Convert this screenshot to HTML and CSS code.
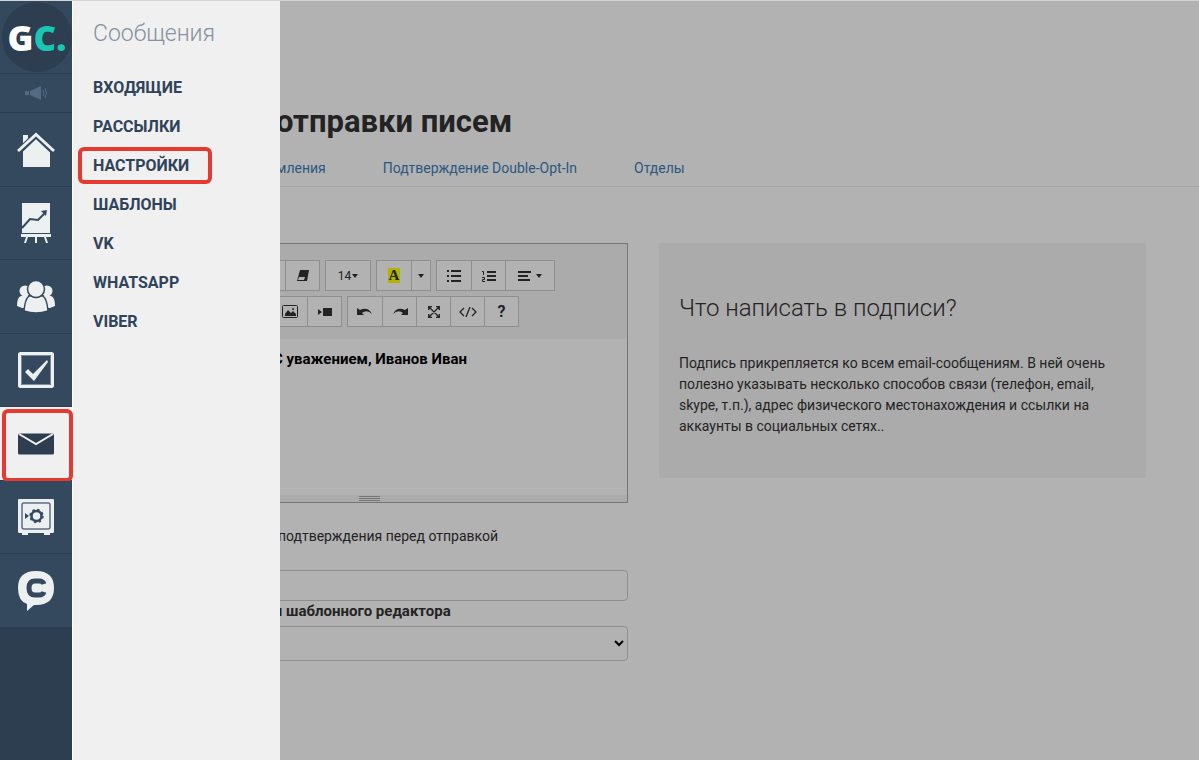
FILE: index.html
```html
<!DOCTYPE html>
<html lang="ru">
<head>
<meta charset="utf-8">
<title>Сообщения</title>
<link rel="stylesheet" href="styles.css">
</head>
<body>
<div class="app">
  <nav class="sidebar">
    <a class="side-item side-logo" href="#" aria-label="GC">
      <span class="logo"><span class="logo-g">G</span><span class="logo-c">C.</span></span>
    </a>
    <a class="side-item side-horn" href="#" aria-label="Новости">
      <svg width="24" height="16" viewBox="0 0 24 16"><path fill="#536a82" d="M1 6h4v4H1zM6 6l11-5v14L6 10z"/><path fill="none" stroke="#536a82" d="M19 5q2 3 0 6M21 3q3 5 0 10"/></svg>
    </a>
    <a class="side-item" href="#" aria-label="Главная">
      <svg width="38" height="36" viewBox="0 0 38 36"><path fill="#ecf0f1" d="M6 3h5v4l-5 5zM19 6l14 13v16H6V19z"/><path fill="none" stroke="#34495e" stroke-width="6" d="M1 20 19 3l18 17"/><path fill="none" stroke="#ecf0f1" stroke-width="3" d="M1 19 19 2.500l18 16.500"/></svg>
    </a>
    <a class="side-item" href="#" aria-label="Статистика">
      <svg width="30" height="42" viewBox="0 0 30 42"><path fill="#ecf0f1" d="M1 1h28v30H1zM0 32h30v3H0zM5 35h2l-2 6H3zM14 35h2v6h-2zM23 35h2l2 6h-2z"/><path fill="none" stroke="#34495e" stroke-width="2" d="m1 26 8-9 8 1 7-7"/><path fill="#34495e" d="m26 8-1 6-5-5z"/><path stroke="#34495e" d="M1 31.500h28"/></svg>
    </a>
    <a class="side-item" href="#" aria-label="Пользователи">
      <svg width="38" height="34" viewBox="0 0 38 34"><g fill="#ecf0f1"><circle cx="8" cy="11" r="5.500"/><circle cx="30" cy="11" r="5.500"/><path d="M0 26q0-9 4-10h30q4 1 4 10l-5 2H5z"/></g><g fill="#ecf0f1" stroke="#34495e" stroke-width="1.500"><path d="M7 31q1-12 5-15h14q4 3 5 15-12 4-24 0z"/><circle cx="19" cy="9" r="8.500"/></g></svg>
    </a>
    <a class="side-item" href="#" aria-label="Задачи">
      <svg width="36" height="36" viewBox="0 0 36 36"><rect x="1.500" y="1.500" width="33" height="33" rx="1" fill="none" stroke="#ecf0f1" stroke-width="3"/><path fill="none" stroke="#7c8b9b" d="M3.500 3.500h29v29h-29z"/><path fill="#ecf0f1" d="m7 20 3-3 5 5L29 8l1 2-14 19z"/></svg>
    </a>
    <a class="side-item side-active" href="#" aria-label="Сообщения">
      <svg width="36" height="22" viewBox="0 0 36 22"><rect y="0.500" width="36" height="21" rx="1.500" fill="#2c3e50"/><path fill="none" stroke="#f0f0f0" stroke-width="2" d="m1 1 17 10L35 1"/></svg>
    </a>
    <a class="side-item" href="#" aria-label="Продажи">
      <svg width="36" height="36" viewBox="0 0 36 36"><path fill="#ecf0f1" d="M1 0h34q1 0 1 1v32q0 1-1 1h-3v2h-6v-2H10v2H4v-2H1q-1 0-1-1V1q0-1 1-1z"/><rect x="4" y="4" width="28" height="26" rx="2" fill="none" stroke="#5d6f80" stroke-width="1.500"/><circle cx="18.500" cy="17" r="5" fill="none" stroke="#34495e" stroke-width="2.500"/><circle cx="18.500" cy="17" r="6.500" fill="none" stroke="#34495e" stroke-width="1.500" stroke-dasharray="2.500 2.600"/><path fill="#34495e" d="m7 14 4 3-4 3z"/></svg>
    </a>
    <a class="side-item" href="#" aria-label="Чат">
      <svg width="36" height="40" viewBox="0 0 36 40"><path fill="#ecf0f1" d="M18 0q18 0 18 17T18 34h-2l-7 6V33Q0 30 0 17 0 0 18 0z"/><path fill="none" stroke="#34495e" stroke-width="5" d="M26 13q-1-3-5-3h-4q-6 0-6 7t6 7h4q4 0 5-3"/></svg>
    </a>
  </nav>

  <main class="page">
    <header class="page-head">
      <h1 class="page-title">отправки писем</h1>
      <div class="tabs">
        <a href="#">мления</a>
        <a href="#">Подтверждение Double-Opt-In</a>
        <a href="#">Отделы</a>
      </div>
    </header>
    <div class="columns">
      <form class="form">
        <div class="editor">
          <div class="toolbar">
            <div class="tool-row tool-row-first">
              <div class="group">
                <button type="button" class="tool" aria-label="Зачеркнутый"></button>
                <button type="button" class="tool" aria-label="Очистить"><svg width="12" height="11" viewBox="0 0 12 11"><path fill="#333" d="M3 0h9l-2 11H0z"/><path fill="#fff" d="M2 7h6l-1 3H1z"/></svg></button>
              </div>
              <div class="group"><button type="button" class="tool tool-size">14<span class="caret"></span></button></div>
              <div class="group">
                <button type="button" class="tool"><span class="marker">A</span></button>
                <button type="button" class="tool tool-caret" aria-label="Цвет"><span class="caret"></span></button>
              </div>
              <div class="group">
                <button type="button" class="tool" aria-label="Список"><svg width="14" height="12" viewBox="0 0 14 12"><path fill="#333" d="M0 0h2v2H0zM4 0h10v2H4zM0 5h2v2H0zM4 5h10v2H4zM0 10h2v2H0zM4 10h10v2H4z"/></svg></button>
                <button type="button" class="tool" aria-label="Нумерованный список"><svg width="14" height="12" viewBox="0 0 14 12"><path fill="#333" d="M5 1h9v2H5zM5 5h9v2H5zM5 9h9v2H5z"/><path fill="none" stroke="#333" d="M0 1.500h1.500V5M0 7.500h2.500v2H.5v2H3"/></svg></button>
                <button type="button" class="tool tool-align" aria-label="Выравнивание"><svg width="13" height="10" viewBox="0 0 13 10"><path fill="#333" d="M0 0h13v2H0zM0 4h10v2H0zM0 8h12v2H0z"/></svg><span class="caret"></span></button>
              </div>
            </div>
            <div class="tool-row tool-row-second">
              <div class="group">
                <button type="button" class="tool" aria-label="Картинка"><svg width="16" height="13" viewBox="0 0 16 13"><rect x="0.500" y="0.500" width="15" height="12" rx="1" fill="none" stroke="#333"/><path fill="#333" d="M3 11V9l3-4 3 3 2-2 3 3v2z"/><circle cx="11" cy="4" r="1" fill="#333"/></svg></button>
                <button type="button" class="tool" aria-label="Видео"><svg width="14" height="10" viewBox="0 0 14 10"><path fill="#333" d="M5 1h9v8H5zM0 2l4 3-4 3z"/></svg></button>
              </div>
              <div class="group">
                <button type="button" class="tool" aria-label="Отменить"><svg width="16" height="10" viewBox="0 0 16 10"><path fill="#333" d="M0 1v7h7L5 6q5-4 10 1Q11-1 3 3z"/></svg></button>
                <button type="button" class="tool" aria-label="Повторить"><svg width="16" height="10" viewBox="0 0 16 10"><path fill="#333" d="M16 1v7H9l2-2Q6 2 1 7 5-1 13 3z"/></svg></button>
                <button type="button" class="tool" aria-label="На весь экран"><svg width="12" height="12" viewBox="0 0 12 12"><path fill="none" stroke="#333" stroke-width="1.300" d="m1 1 10 10M11 1 1 11M.7 4V.7H4M8 .7h3.300V4M.7 8v3.300H4M8 11.300h3.300V8"/></svg></button>
                <button type="button" class="tool" aria-label="Код"><svg width="18" height="10" viewBox="0 0 18 10"><path fill="none" stroke="#333" stroke-width="1.300" d="M5 1 1 5l4 4M13 1l4 4-4 4M11 0 7 10"/></svg></button>
                <button type="button" class="tool tool-help">?</button>
              </div>
            </div>
          </div>
          <div class="editor-body">С уважением, Иванов Иван</div>
          <div class="grip"><span class="grip-lines"></span></div>
        </div>
        <p class="confirm">подтверждения перед отправкой</p>
        <input class="field" type="text" aria-label="Адрес отправителя">
        <label class="field-label" for="template">я шаблонного редактора</label>
        <select class="field field-select" id="template"><option></option></select>
      </form>
      <aside class="hint">
        <h2 class="hint-title">Что написать в подписи?</h2>
        <p class="hint-text">Подпись прикрепляется ко всем email-сообщениям. В ней очень полезно указывать несколько способов связи (телефон, email, skype, т.п.), адрес физического местонахождения и ссылки на аккаунты в социальных сетях..</p>
      </aside>
    </div>
  </main>

  <div class="backdrop"></div>
  <section class="flyout">
    <h2 class="flyout-title">Сообщения</h2>
    <a class="flyout-link" href="#">ВХОДЯЩИЕ</a>
    <a class="flyout-link" href="#">РАССЫЛКИ</a>
    <a class="flyout-link flyout-marked" href="#">НАСТРОЙКИ</a>
    <a class="flyout-link" href="#">ШАБЛОНЫ</a>
    <a class="flyout-link" href="#">VK</a>
    <a class="flyout-link" href="#">WHATSAPP</a>
    <a class="flyout-link" href="#">VIBER</a>
  </section>
</div>
</body>
</html>
```
FILE: styles.css
```css
* { box-sizing: border-box; }
body {
  margin: 0;
  background: #fff;
  color: #333;
  font: 14px/21px Roboto, "Liberation Sans", sans-serif;
}
a { text-decoration: none; }
h1, h2, p { margin: 0; }
svg { display: block; }

.app {
  position: relative;
  display: flex;
  min-height: 100vh;
  border-top: 1px solid #d3d5d5;
}

/* Sidebar */
.sidebar {
  position: relative;
  z-index: 3;
  flex: none;
  width: 72px;
  background: #2c3e50;
}
.side-item {
  position: relative;
  display: flex;
  align-items: center;
  justify-content: center;
  height: 74px;
  background: #34495e;
  border-bottom: 1px solid #2b3d50;
}
.side-item:nth-child(even) { height: 73px; }
.sidebar .side-logo { height: 73px; }
.sidebar .side-horn { height: 39px; }
.side-active { background: #f0f0f0; }
.logo {
  display: flex;
  align-items: center;
  justify-content: center;
  width: 70px;
  height: 70px;
  margin-left: 2px;
  border-radius: 50%;
  background: #2c3e50;
  font: 800 35px/1 "Open Sans", sans-serif;
}
.logo-g { color: #fff; }
.logo-c { color: #1cc4b4; }
.side-active::after {
  content: "";
  position: absolute;
  inset: 2px -1px -2px 2px;
  border: 4px solid #e53a30;
  border-radius: 6px;
}

/* Flyout menu */
.flyout {
  position: absolute;
  z-index: 2;
  top: 0;
  bottom: 0;
  left: 72px;
  width: 208px;
  padding: 18px 5px;
  background: #f0f0f0;
  border-left: 1px solid #fff;
}
.flyout-title {
  padding: 0 15px;
  margin-bottom: 20px;
  color: #8791a0;
  font-size: 23px;
  line-height: 30px;
  font-weight: 300;
}
.flyout-link {
  display: block;
  width: fit-content;
  margin-bottom: 2px;
  padding: 8px 15px;
  color: #2f435a;
  font-size: 16px;
  font-weight: 700;
}
.flyout-marked {
  position: relative;
}
.flyout-marked::after {
  content: "";
  position: absolute;
  inset: 0 -8px 0 0;
  border: 4px solid #e53a30;
  border-radius: 6px;
}
.backdrop {
  position: absolute;
  z-index: 1;
  inset: 0;
  background: rgba(0, 0, 0, 0.3);
}

/* Page */
.page { flex: 1; min-width: 0; }
.page-head {
  padding: 101px 0 7px 204px;
  border-bottom: 1px solid #eee;
}
.page-title {
  margin-bottom: 16px;
  font-size: 31px;
  line-height: 40px;
  font-weight: 700;
}
.tabs { display: flex; gap: 57px; }
.tabs a { color: #4080b8; }
.columns {
  display: grid;
  grid-template-columns: 1fr 1fr;
  align-items: start;
  gap: 31px;
  padding: 56px 53px 20px 69px;
}

/* Editor */
.editor { border: 1px solid #a9a9a9; }
.toolbar {
  display: flex;
  flex-direction: column;
  gap: 5px;
  padding: 16px 0 12px;
  background: #f5f5f5;
}
.tool-row { display: flex; gap: 5px; }
.tool-row-first { padding-left: 108px; }
.tool-row-second { padding-left: 130px; }
.group {
  display: flex;
  border: 1px solid #ccc;
}
.tool {
  display: flex;
  align-items: center;
  justify-content: center;
  gap: 5px;
  width: 34px;
  height: 29px;
  padding: 0;
  border: 0;
  background: #fff;
  color: #333;
  font: 12px/18px Roboto, sans-serif;
}
.tool + .tool { border-left: 1px solid #ccc; }
.tool-size { width: 44px; gap: 1px; }
.tool-caret { width: 19px; }
.tool-align { width: 49px; }
.tool-help { font-size: 16px; font-weight: 700; }
.caret {
  border: 3px solid transparent;
  border-top: 4px solid #333;
  border-bottom: 0;
}
.marker {
  padding: 0 1px;
  background: #ff0;
  font: 700 15px/15px "Liberation Serif", serif;
}
.editor-body {
  min-height: 156px;
  padding: 10px 0 8px 131px;
  color: #000;
  font-size: 15px;
  font-weight: 700;
}
.grip {
  display: flex;
  justify-content: center;
  padding: 1px 0;
  background: #f5f5f5;
}
.grip-lines {
  width: 21px;
  height: 5px;
  margin-right: 31px;
  border: solid #a9a9a9;
  border-width: 1px 0;
  background: linear-gradient(#a9a9a9, #a9a9a9) center / 100% 1px no-repeat;
}
.confirm { padding: 23px 0 23px 137px; }
.field {
  display: block;
  width: 100%;
  height: 31px;
  border: 1px solid #ccc;
  border-radius: 4px;
  background: #fff;
}
.field-label {
  display: block;
  margin-bottom: 5px;
  padding-left: 133px;
  font-size: 15px;
  line-height: 20px;
  font-weight: 700;
}
.field-select { height: 35px; }

/* Hint */
.hint {
  padding: 49px 20px 41px;
  background: #f5f5f5;
}
.hint-title {
  margin-bottom: 28px;
  font-size: 24px;
  line-height: 33px;
  font-weight: 300;
}
```
